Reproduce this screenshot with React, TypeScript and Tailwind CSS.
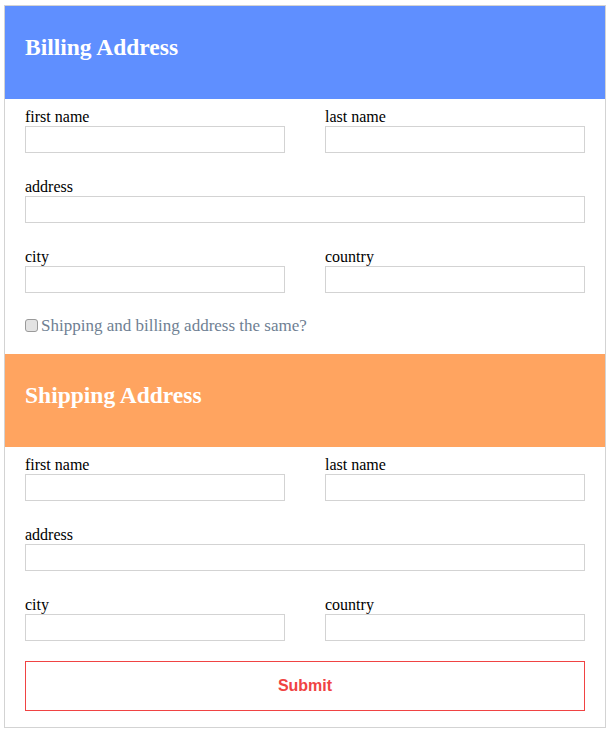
const serif = { fontFamily: '"Liberation Serif", "Times New Roman", serif' };

function Field({ label }: { label: string }) {
  return (
    <div className="flex flex-col">
      <label className="block text-[16px] leading-[18px] text-black">{label}</label>
      <input
        type="text"
        className="box-border h-[27px] w-full border border-[#d3d3d3] bg-white px-1 outline-none"
      />
    </div>
  );
}

function AddressFields() {
  return (
    <div className="flex flex-col gap-[25px] px-5 pt-[9px]">
      <div className="grid grid-cols-2 gap-x-10">
        <Field label="first name" />
        <Field label="last name" />
      </div>
      <Field label="address" />
      <div className="grid grid-cols-2 gap-x-10">
        <Field label="city" />
        <Field label="country" />
      </div>
    </div>
  );
}

function Header({ title, color }: { title: string; color: string }) {
  return (
    <div className={`h-[93px] px-5 pt-[28px] ${color}`}>
      <h2 className="text-[23.5px] font-bold leading-[27px] text-white">{title}</h2>
    </div>
  );
}

export default function App() {
  return (
    <div className="bg-white pl-1 pt-[5px]" style={serif}>
      <form
        className="w-[602px] border border-[#d3d3d3] bg-white"
        onSubmit={(e) => e.preventDefault()}
      >
        <Header title="Billing Address" color="bg-[#5f8fff]" />
        <AddressFields />
        <div className="flex items-start px-5 pt-[24px] pb-[19px] text-[17px] leading-[18px] text-[#6f7f93]">
          <input
            type="checkbox"
            className="m-0 mr-[3px] mt-[2px] h-[13px] w-[13px] shrink-0 appearance-none rounded-[3px] border border-[#9a9a9a] bg-[#e3e3e3]"
          />
          <span>Shipping and billing address the same?</span>
        </div>
        <Header title="Shipping Address" color="bg-[#ffa460]" />
        <AddressFields />
        <div className="px-5 pt-5 pb-4">
          <button
            type="submit"
            className="box-border h-[50px] w-full border border-[#f04343] bg-white text-[16px] font-bold text-[#f04343]"
            style={{ fontFamily: '"Liberation Sans", Arial, sans-serif' }}
          >
            Submit
          </button>
        </div>
      </form>
    </div>
  );
}
